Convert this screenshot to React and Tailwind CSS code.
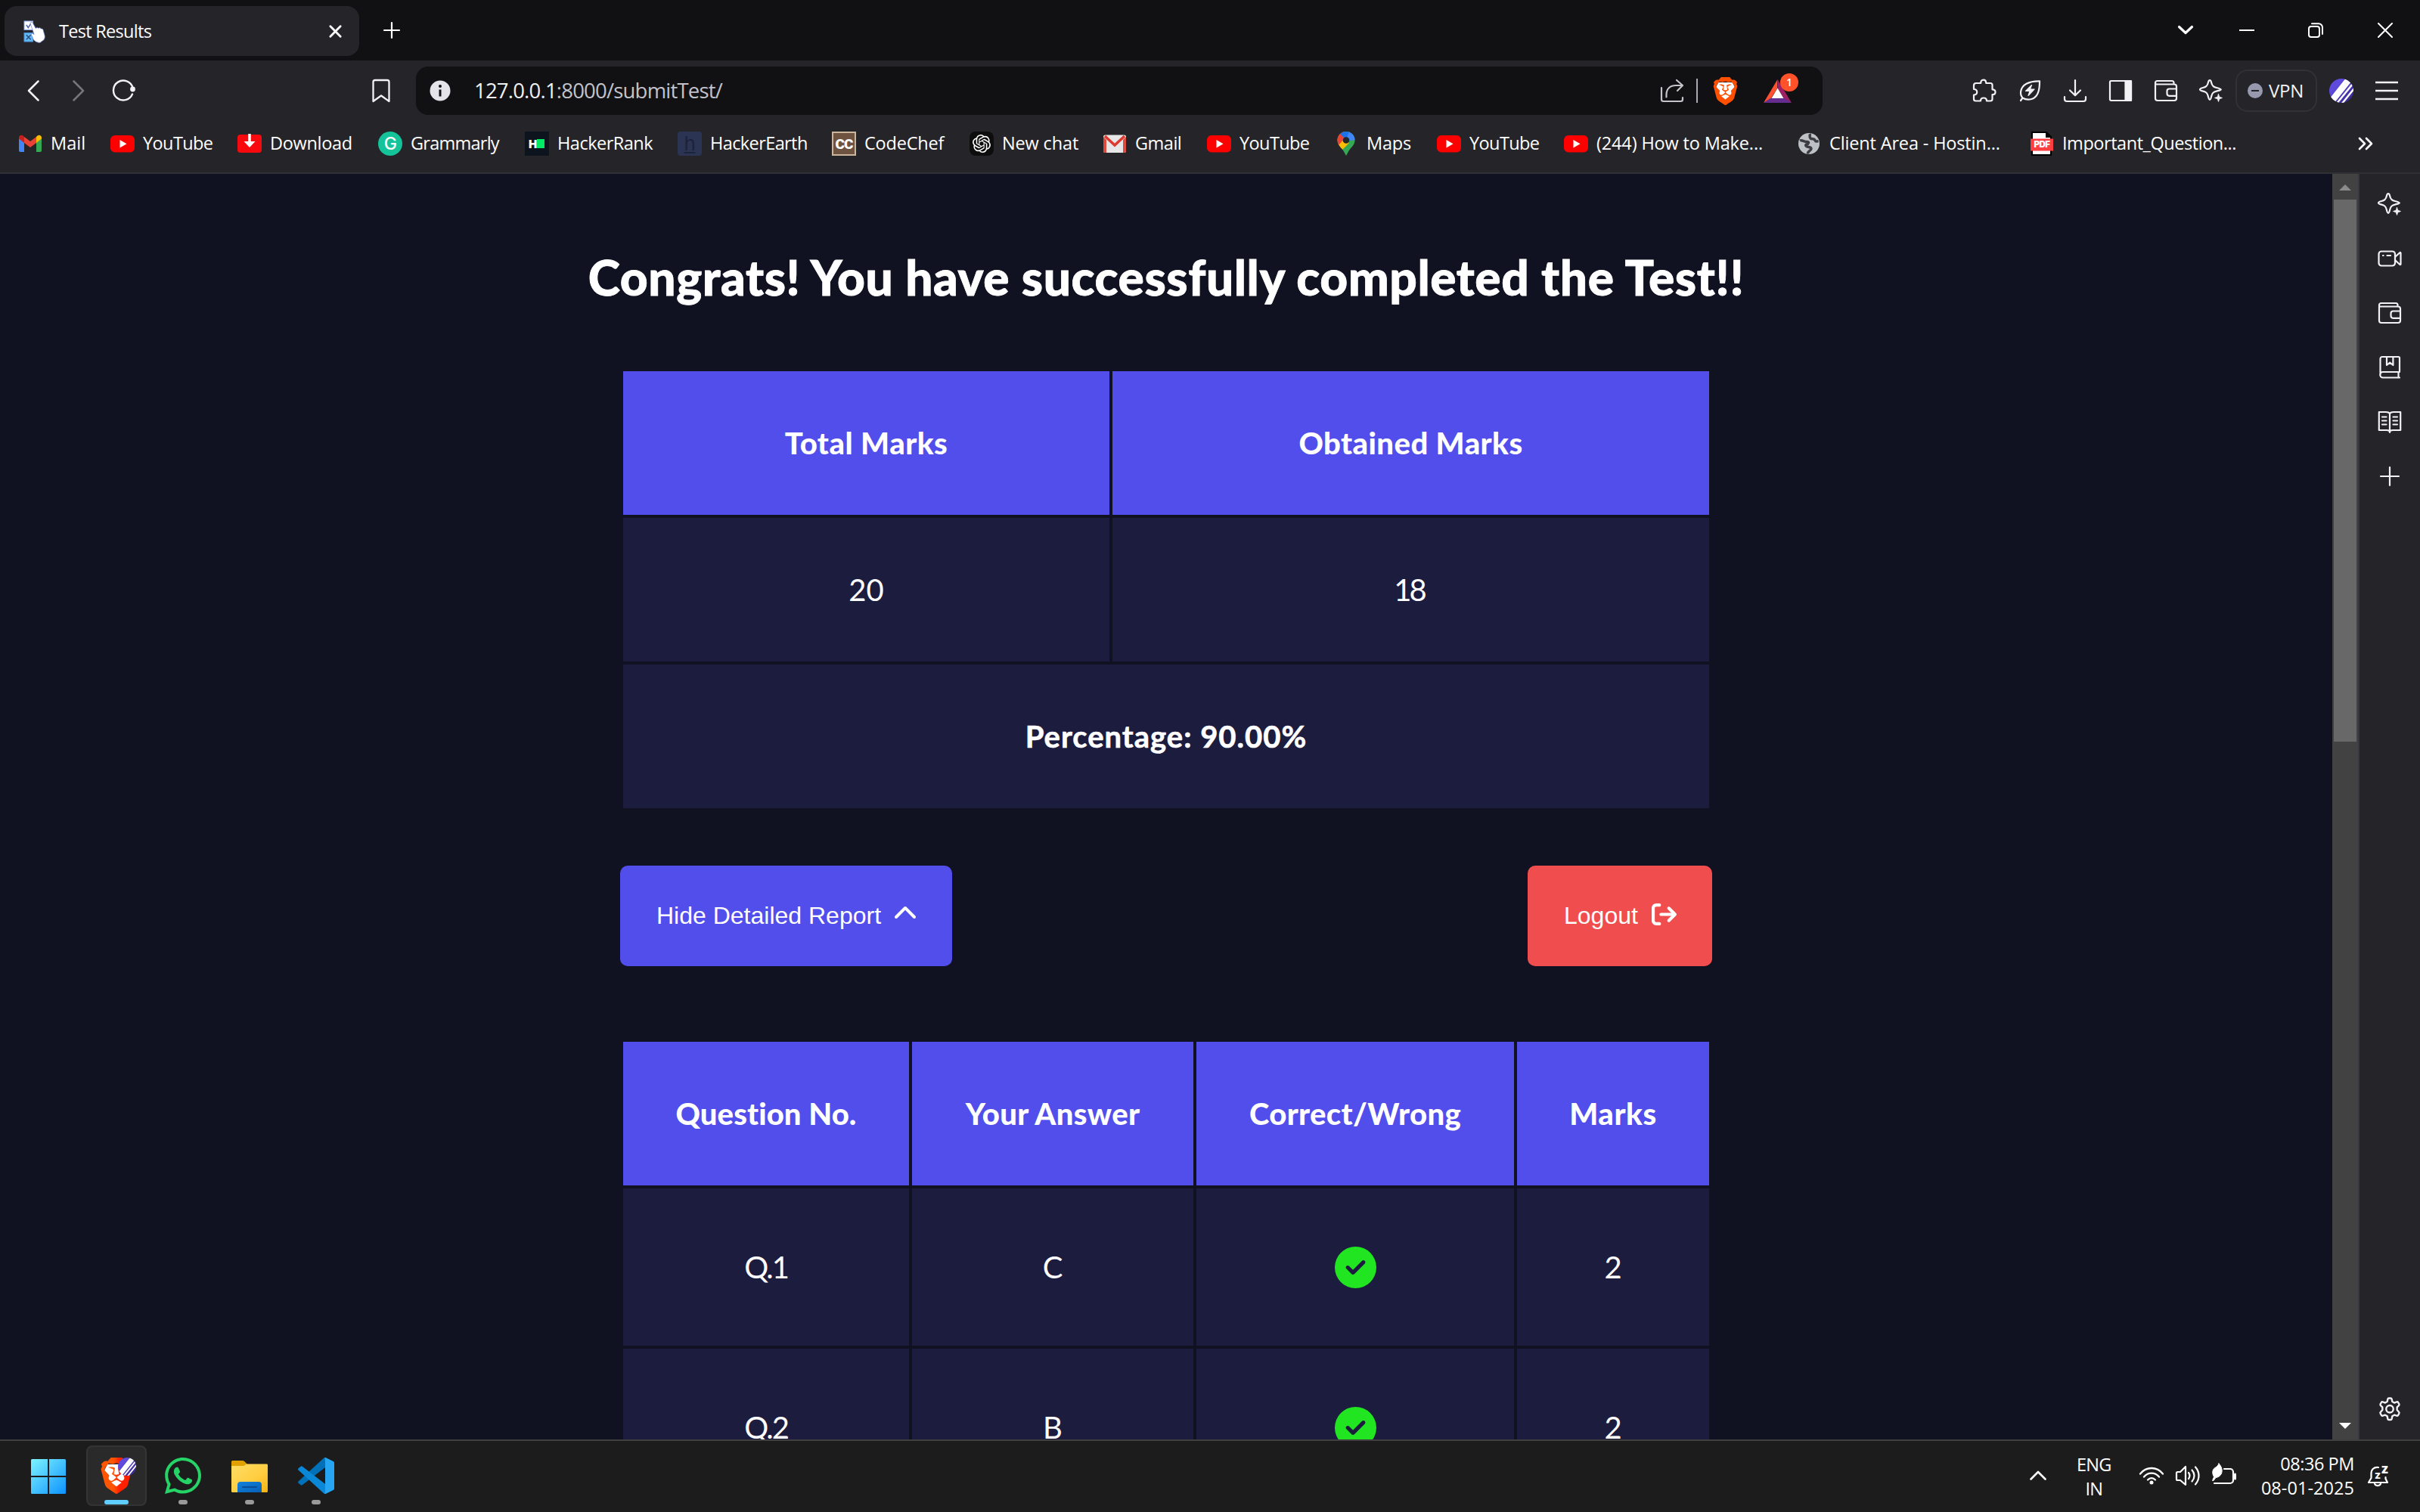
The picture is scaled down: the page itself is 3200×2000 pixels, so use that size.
import { FaChevronUp, FaArrowRightFromBracket, FaCircleCheck, FaWhatsapp } from "react-icons/fa6";
import { SiBrave, SiOpenai } from "react-icons/si";

const line = {
  fill: "none",
  stroke: "currentColor",
  strokeLinecap: "round",
  strokeLinejoin: "round",
};

/* ---------- shared outline icons, 32px grid ---------- */

function Icon({ children, className = "size-8", w = 2.2 }) {
  return (
    <svg viewBox="0 0 32 32" className={className} {...line} strokeWidth={w}>
      {children}
    </svg>
  );
}

const SparkleIcon = () => (
  <Icon>
    <path d="M14 2.2c1.300 0 1.700 1 2.200 3.200 1 4.200 2.400 5.600 6.600 6.600 2.600.6 6 1.500 6 2.400s-3.400 1.500-6 2.200c-4.200 1-5.600 2.400-6.600 6.600-.5 2.300-1 4.600-2.200 4.600s-1.700-2.300-2.200-4.600c-1-4.200-2.400-5.600-6.600-6.600C2.800 16.100 1 15.600 1 14.400S2.800 12.600 5.200 12c4.200-1 5.600-2.400 6.600-6.600.5-2.200 1-3.200 2.200-3.200z" />
    <path fill="currentColor" strokeWidth=".8" d="M25.500 20.500l1.300 3.700 3.700 1.300-3.700 1.300-1.300 3.700-1.300-3.700-3.700-1.300 3.700-1.300z" />
  </Icon>
);

const WalletIcon = () => (
  <Icon>
    <path d="M2 7.500V26a3 3 0 0 0 3 3h22a3 3 0 0 0 3-3V10.500a3 3 0 0 0-3-3H3.500A1.500 1.500 0 0 1 2 6V5.500A2.500 2.500 0 0 1 4.500 3H24a2.500 2.500 0 0 1 2.500 2.500v2" />
    <path d="M30 13.500H20.500a3 3 0 0 0-3 3v3.300a3 3 0 0 0 3 3H30" />
  </Icon>
);

const PuzzleIcon = () => (
  <Icon>
    <path d="M5 6h6.200c0-2.800 1.200-4.300 3.500-4.300S18.200 3.200 18.200 6H24a2.500 2.500 0 0 1 2.500 2.500v5.800c2.700 0 4 1.200 4 3.400s-1.300 3.400-4 3.400V27A2.500 2.500 0 0 1 24 29.500h-5c0-2.600-1.300-4-4-4s-4 1.400-4 4H4.500A2.500 2.500 0 0 1 2 27v-5.500c2.800 0 4.200-1.400 4.200-3.700S4.800 14 2 14V9a3 3 0 0 1 3-3z" />
  </Icon>
);

const LeafIcon = () => (
  <Icon>
    <path d="M4 29l2.500-3.500c-2.200-2.500-3-5-2.300-9C5.700 8.500 14 3 29 3.300c.2 12-2.500 21.500-10.500 23.700-4.500 1.200-8.500.7-12-1.500" />
    <path fill="currentColor" strokeWidth="1.200" d="M18.500 8.500l-8 8h5.500l-2 6 8-8.500h-5.500z" />
  </Icon>
);

const DownloadIcon = () => (
  <Icon>
    <path d="M16 2v20M9 15.500l7 6.800 7-6.800M2 24v3a3 3 0 0 0 3 3h22a3 3 0 0 0 3-3v-3" />
  </Icon>
);

const PanelIcon = () => (
  <Icon>
    <rect x="2" y="3" width="28" height="26" rx="1.500" />
    <rect x="22.500" y="3" width="7.500" height="26" fill="currentColor" />
  </Icon>
);

const VideoIcon = () => (
  <Icon>
    <rect x="1.500" y="6.500" width="21.500" height="19" rx="3.500" />
    <path d="M23 14l6.200-5.800c.6-.6 1.300-.3 1.300.6v14.400c0 .9-.7 1.200-1.300.6L23 18M7 12h.6M12.500 12h4.500" />
  </Icon>
);

const BookmarkBookIcon = () => (
  <Icon>
    <path d="M3.500 26V4.500A2.500 2.500 0 0 1 6 2h21.500A1.500 1.500 0 0 1 29 3.500V22H7a3.500 3.500 0 1 0 0 7.500h22M27.500 22v7.500M12 2v11l4.200-3.300 4.200 3.300V2" />
  </Icon>
);

const ReaderIcon = () => (
  <Icon>
    <path d="M16 5c-1-1.500-3-2-5-2H1.800v24H12c2.500 0 4 1 4 3 0-2 1.500-3 4-3h10.200V3H21c-2 0-4 .5-5 2zM16 5v25M6 9.500h5.500M6 14.500h5.500M6 19.500h5.500M20.500 9.500H26M20.500 14.500H26M20.500 19.500H26" />
  </Icon>
);

const PlusIcon = () => (
  <Icon>
    <path d="M16 4v24M4 16h24" />
  </Icon>
);

const GearIcon = () => (
  <svg viewBox="0 0 24 24" className="mb-0.5 size-[38px]" {...line} strokeWidth="1.500">
    <circle cx="12" cy="12.500" r="3" />
    <path d="M10.300 2.800c.1-.5.5-.8 1-.8h1.400c.5 0 .9.300 1 .8l.4 2 1.700 1 2-.7c.5-.2 1 0 1.200.4l.8 1.300c.2.400.2.9-.2 1.200l-1.500 1.500v2.300l1.500 1.700c.4.300.4.800.2 1.200L19 16.200c-.2.400-.7.600-1.200.4l-2-.6-1.700 1-.4 2.200c-.1.500-.5.800-1 .8h-1.400c-.5 0-.9-.3-1-.8L9.900 17l-1.700-1-2 .6c-.5.200-1 0-1.200-.4l-.8-1.500c-.2-.4-.2-.9.200-1.200l1.500-1.700V9.500L4.400 8c-.4-.3-.4-.8-.2-1.200L5 5.500c.2-.4.7-.6 1.200-.4l2 .7 1.700-1z" transform="translate(0 1.500)" />
  </svg>
);

function NightlyBadge({ className }) {
  return (
    <svg viewBox="0 0 32 32" className={className}>
      <defs>
        <linearGradient id="nightly" x1="0" y1="0" x2="1" y2="1">
          <stop offset=".3" stopColor="#5e4bdb" />
          <stop offset="1" stopColor="#33217f" />
        </linearGradient>
        <clipPath id="nightlyClip">
          <circle cx="16" cy="16" r="16" />
        </clipPath>
      </defs>
      <g clipPath="url(#nightlyClip)">
        <rect width="32" height="32" fill="url(#nightly)" />
        <path d="M3 30L26 1" stroke="#fff" strokeWidth="8.500" />
        <path d="M9 34L33 4.500M14.500 36L37 8" stroke="#fff" strokeWidth="2.400" />
      </g>
    </svg>
  );
}

function BraveLion({ className, fill }) {
  return (
    <span className="relative flex">
      <svg viewBox="0 0 24 24" className={`absolute inset-0 ${className}`}>
        <path fill="#fff" d="M6 4.500h12l2 4-3 9-5 4-5-4-3-9z" />
      </svg>
      <SiBrave className={`relative ${className}`} fill={fill} />
    </span>
  );
}

/* ---------- tab strip ---------- */

function TabStrip() {
  return (
    <div className="flex h-20 shrink-0 items-center bg-[#111113]">
      <div className="ml-1.5 flex h-[66px] w-[469px] items-center rounded-2xl bg-[#252429] pl-[25px] pr-5 mt-0.5">
        <svg viewBox="0 0 32 32" className="size-[31px] shrink-0">
          <rect x="1" y="2" width="12" height="12" fill="#fff" stroke="#7fa0e8" />
          <path d="M4 7l2.500 4L11 4" fill="none" stroke="#4a5fa5" strokeWidth="1.500" />
          <rect x="1" y="18" width="12" height="12" fill="#62b8f0" stroke="#4a8fdc" />
          <path d="M4 21l6 6M10 21l-6 6" stroke="#26477f" strokeWidth="1.400" />
          <path d="M9.500 5.500C9 3.500 11.500 2.500 12.700 4.500L17 12c.6-1.500 2.800-1.600 3.500-.2.900-1.100 2.900-.8 3.400.7 1.200-.6 2.700.1 3 1.500l2 7c.7 2.500.4 4.500-1 6.500l-5.400 4c-3.500-.3-7-1.500-9-4.500L11 21c-.8-1.500.8-2.800 2.200-1.800l1.300 1z" fill="#fff" stroke="#5f78d0" strokeWidth=".7" />
        </svg>
        <span className="ml-4 mt-0.5 text-[23.500px] tracking-[-0.700px]">Test Results</span>
        <svg viewBox="0 0 20 20" className="ml-auto mr-0.5 size-[19px]" {...line} strokeWidth="3">
          <path d="M3 3l14 14M17 3L3 17" />
        </svg>
      </div>
      <svg viewBox="0 0 24 24" className="ml-[31px] size-6" {...line} strokeWidth="2.200">
        <path d="M12 2v20M2 12h20" />
      </svg>
      <div className="ml-auto mr-9 flex items-center">
        <svg viewBox="0 0 22 22" className="size-[22px]" {...line} strokeWidth="3.200">
          <path d="M2.500 6.500L11 14.500l8.500-8" />
        </svg>
        <svg viewBox="0 0 20 20" className="ml-[60px] size-5">
          <path d="M0 10h20" stroke="#fff" strokeWidth="2" />
        </svg>
        <svg viewBox="0 0 20 20" className="ml-[71px] size-5" {...line} strokeWidth="2">
          <rect x="1" y="5" width="14" height="14" rx="3" />
          <path d="M5 1.300h9a5 5 0 0 1 5 5V15" />
        </svg>
        <svg viewBox="0 0 20 20" className="ml-[72px] size-5" {...line} strokeWidth="2">
          <path d="M1 1l18 18M19 1L1 19" />
        </svg>
      </div>
    </div>
  );
}

/* ---------- navigation bar ---------- */

function Cell({ children, className = "" }) {
  return <div className={`flex w-[60px] shrink-0 items-center justify-center ${className}`}>{children}</div>;
}

function AddressBar() {
  return (
    <div className="ml-4 flex h-16 w-[1860px] items-center rounded-2xl bg-[#111113] pl-[18px]">
      <svg viewBox="0 0 28 28" className="size-7">
        <circle cx="14" cy="14" r="13.500" fill="#e4e3ea" />
        <circle cx="14" cy="8" r="2" fill="#111113" />
        <path d="M14 12.500v9" stroke="#111113" strokeWidth="3" />
      </svg>
      <span className="ml-[31px] text-[27.500px] tracking-[-0.800px] text-[#c3c3cb]">
        <span className="text-[#f0f0f4]">127.0.0.1</span>:8000/submitTest/
      </span>
      <svg viewBox="0 0 32 32" className="ml-auto size-8 text-[#c4c4ca]" {...line} strokeWidth="2.200">
        <path d="M2 12v15.500A2.500 2.500 0 0 0 4.500 30h23a2.500 2.500 0 0 0 2.500-2.500V25M8.500 24.500V21C8.500 13 14 9 21 9h8.500M22 2l8 7-7 7" />
      </svg>
      <span className="ml-4 h-8 w-0.5 bg-[#a9a9b0]" />
      <span className="ml-[18px] flex">
        <BraveLion className="size-[37px]" fill="#ff5000" />
      </span>
      <span className="relative ml-8 mr-[41px] flex">
        <svg viewBox="0 0 37 33" className="h-[33px] w-[37px]">
          <path d="M18.500 1L0 32l10-6 8-13z" fill="#ff5030" />
          <path d="M18.500 1L37 32l-10-6-8.500-13z" fill="#9e1f63" />
          <path d="M0 32h37l-10-6.500H10z" fill="#662d91" />
          <path d="M18.500 12.500L26.500 26h-16z" fill="#fff" />
        </svg>
        <span className="absolute -top-[7px] left-[22px] flex size-6 items-center justify-center rounded-full bg-[#ff5229] text-[14px] font-semibold leading-none text-white">
          1
        </span>
      </span>
    </div>
  );
}

function NavBar() {
  return (
    <div className="flex h-20 items-center text-[#f2f2f5]">
      <Cell className="ml-3.5">
        <svg viewBox="0 0 16 28" className="h-7 w-4" {...line} strokeWidth="2.500">
          <path d="M14.500 1.500L2 14l12.500 12.500" />
        </svg>
      </Cell>
      <Cell className="text-[#77767c]">
        <svg viewBox="0 0 16 28" className="h-7 w-4" {...line} strokeWidth="2.500">
          <path d="M1.500 1.500L14 14 1.500 26.500" />
        </svg>
      </Cell>
      <Cell>
        <svg viewBox="0 0 32 32" className="size-8" {...line} strokeWidth="2.400">
          <path d="M27 20.500A13 13 0 1 1 27.500 12" />
          <circle cx="27.500" cy="14" r="3.400" fill="currentColor" stroke="none" />
        </svg>
      </Cell>
      <Cell className="ml-[280px]">
        <svg viewBox="0 0 24 32" className="h-8 w-6" {...line} strokeWidth="2.300">
          <path d="M4 2h16a2.500 2.500 0 0 1 2.500 2.500V30L12 22.500 1.500 30V4.500A2.500 2.500 0 0 1 4 2z" />
        </svg>
      </Cell>
      <AddressBar />
      <Cell className="ml-[184px]">
        <PuzzleIcon />
      </Cell>
      <Cell>
        <LeafIcon />
      </Cell>
      <Cell>
        <DownloadIcon />
      </Cell>
      <Cell>
        <PanelIcon />
      </Cell>
      <Cell>
        <WalletIcon />
      </Cell>
      <Cell>
        <SparkleIcon />
      </Cell>
      <div className="ml-0.5 flex h-14 w-[108px] items-center rounded-2xl border-2 border-[#323137] pl-3.5">
        <span className="flex size-5 items-center justify-center rounded-full bg-[#9799ae]">
          <span className="h-[2.500px] w-2.5 bg-[#252429]" />
        </span>
        <span className="ml-2 text-[24px] leading-none tracking-[-0.300px]">VPN</span>
      </div>
      <NightlyBadge className="ml-4 size-8" />
      <svg viewBox="0 0 30 26" className="ml-[29px] h-[26px] w-[30px]" {...line} strokeLinecap="butt" strokeWidth="2.500">
        <path d="M0 2h30M0 13h30M0 24h30" />
      </svg>
    </div>
  );
}

/* ---------- bookmarks ---------- */

const YouTube = () => (
  <svg viewBox="0 0 32 32" className="size-8">
    <rect y="5" width="32" height="22.500" rx="6" fill="#f00" />
    <path d="M12.500 11l9 5.200-9 5.200z" fill="#fff" />
  </svg>
);

const MailM = () => (
  <svg viewBox="0 0 32 32" className="size-8">
    <path d="M1 9v16a2 2 0 0 0 2 2h5V14z" fill="#4285f4" />
    <path d="M24 14v13h5a2 2 0 0 0 2-2V9z" fill="#34a853" />
    <path d="M24 7v8l7-5.500V8c0-3-3.300-4.300-5.500-2.500z" fill="#fbbc04" />
    <path d="M8 15V7l8 6 8-6v8l-8 6z" fill="#ea4335" />
    <path d="M1 8v1.500L8 15V7L6.500 5.500C4.300 3.700 1 5 1 8z" fill="#c5221f" />
  </svg>
);

const DownloadFav = () => (
  <svg viewBox="0 0 32 32" className="size-8">
    <rect y="4" width="32" height="24" rx="4" fill="#f8090d" />
    <path d="M16 3v13" stroke="#fff" strokeWidth="3.500" />
    <path d="M8.500 13h15L16 21z" fill="#fff" />
  </svg>
);

const Grammarly = () => (
  <span className="flex size-8 items-center justify-center rounded-full bg-[#15c39a] font-[Inter] text-[23px] font-medium leading-none text-white">G</span>
);

const HackerRank = () => (
  <span className="flex size-8 items-center bg-[#0e141e] pl-[5px]">
    <span className="font-[Inter] text-[15px] font-black leading-none text-white">H</span>
    <span className="h-3 w-2.5 bg-[#00ea64]" />
  </span>
);

const HackerEarth = () => (
  <span className="flex size-8 items-center justify-center rounded-sm bg-[#2c3454] font-[Inter] text-[26px] leading-none text-[#1c2238] underline decoration-2 underline-offset-2">h</span>
);

const CodeChef = () => (
  <span className="flex size-8 items-center justify-center border-2 border-[#cbb59b] bg-[#6f5341] font-['Roboto'] text-[19px] font-black leading-none tracking-[-1px] text-white">CC</span>
);

const ChatFav = () => (
  <span className="flex size-8 items-center justify-center rounded-lg bg-[#0d0d0d]">
    <SiOpenai className="size-6" />
  </span>
);

const Gmail = () => (
  <svg viewBox="0 0 32 32" className="size-8">
    <rect x="1" y="4.500" width="30" height="23.500" rx="2.500" fill="#e8e7e7" />
    <path d="M1 7v19a2 2 0 0 0 2 2h2V11zM31 7v19a2 2 0 0 1-2 2h-2V11z" fill="#dd4b3e" />
    <path d="M3 6l13 12L29 6" fill="none" stroke="#dd3b30" strokeWidth="3.500" />
  </svg>
);

const MapsPin = () => (
  <svg viewBox="0 0 32 32" className="size-8">
    <defs>
      <clipPath id="pin">
        <path d="M16 0a11.500 11.500 0 0 1 11.500 11.500c0 7-5.500 9.500-8.500 15L16 32l-3-5.500C10 21 4.500 18.500 4.500 11.500A11.500 11.500 0 0 1 16 0z" />
      </clipPath>
    </defs>
    <g clipPath="url(#pin)">
      <rect width="32" height="32" fill="#34a853" />
      <path d="M0 0h16L7 11 0 14z" fill="#ea4335" />
      <path d="M7 3l9 8L27 0H10z" fill="#1a73e8" />
      <path d="M20 0h12v11l-12 1-4-2z" fill="#4285f4" />
      <path d="M4 19l9-11 7 7-11 11z" fill="#fbbc04" />
      <path d="M0 3h8l6 6-8 9-6-2z" fill="#ea4335" />
    </g>
    <circle cx="16" cy="11.500" r="4.300" fill="#252429" />
  </svg>
);

const Globe = () => (
  <svg viewBox="0 0 32 32" className="size-8">
    <circle cx="16" cy="16" r="14" fill="#bdc1c6" />
    <path d="M4 12c3-1.500 6 2 9.500 1.500 3.500 0 2 3-.5 3.500s-1 3.500 2.500 3.500 4.500 2.500 2 4.500-3 2-3 4.500M17 3c1 2-1 4.500 1 6s5 0 6 2.500 2 1.500 4.500 1" fill="none" stroke="#3c3c42" strokeWidth="3.500" />
  </svg>
);

const PdfFav = () => (
  <span className="relative flex size-8 items-center justify-center">
    <svg viewBox="0 0 32 32" className="absolute inset-0 size-8">
      <path d="M3 1h19l6 6v24H3z" fill="#fff" stroke="#000" strokeWidth="2" />
      <path d="M21 0v8h8z" fill="#000" />
      <rect x="1" y="9.500" width="30" height="16" fill="#ff3e42" />
    </svg>
    <span className="relative pt-[3px] font-[Inter] text-[11.500px] font-black leading-none text-white">PDF</span>
  </span>
);

const bookmarks = [
  { icon: MailM, text: "Mail", cls: "w-[122px] tracking-[0px]" },
  { icon: YouTube, text: "YouTube", cls: "w-[168px] tracking-[-0.600px]" },
  { icon: DownloadFav, text: "Download", cls: "w-[186px] tracking-[-0.300px]" },
  { icon: Grammarly, text: "Grammarly", cls: "w-[194px] tracking-[-0.750px]" },
  { icon: HackerRank, text: "HackerRank", cls: "w-[202px] tracking-[-0.500px]" },
  { icon: HackerEarth, text: "HackerEarth", cls: "w-[204px] tracking-[-0.600px]" },
  { icon: CodeChef, text: "CodeChef", cls: "w-[182px] tracking-[-0.200px]" },
  { icon: ChatFav, text: "New chat", cls: "w-[176px] tracking-[-0.150px]" },
  { icon: Gmail, text: "Gmail", cls: "w-[138px] tracking-[-0.500px]" },
  { icon: YouTube, text: "YouTube", cls: "w-[168px] tracking-[-0.600px]" },
  { icon: MapsPin, text: "Maps", cls: "w-[136px] tracking-[-0.200px]" },
  { icon: YouTube, text: "YouTube", cls: "w-[168px] tracking-[-0.600px]" },
  { icon: YouTube, text: "(244) How to Make...", cls: "w-[308px] tracking-[-0.150px]" },
  { icon: Globe, text: "Client Area - Hostin...", cls: "w-[308px] tracking-[-0.150px]" },
  { icon: PdfFav, text: "Important_Question...", cls: "w-[308px] tracking-[-0.450px]" },
];

function Bookmarks() {
  return (
    <div className="flex h-[60px] items-center pl-6 text-white">
      {bookmarks.map(({ icon: Fav, text, cls }, i) => (
        <div key={i} className={`flex shrink-0 items-center gap-[11px] whitespace-nowrap text-[23.500px] leading-none ${cls}`}>
          <span className="shrink-0">
            <Fav />
          </span>
          {text}
        </div>
      ))}
      <svg viewBox="0 0 20 18" className="ml-auto mr-[62px] h-[18px] w-5" {...line} strokeWidth="2.600">
        <path d="M2 2l7 7-7 7M11 2l7 7-7 7" />
      </svg>
    </div>
  );
}

/* ---------- page ---------- */

function Th({ children, className = "" }) {
  return (
    <div className={`flex h-[190px] items-center justify-center bg-[#514eec] font-black ${className}`}>{children}</div>
  );
}

function Td({ children, className = "h-[190px]" }) {
  return <div className={`flex items-center justify-center bg-[#1c1c3f] ${className}`}>{children}</div>;
}

const answers = [
  { q: "Q.1", answer: "C", marks: "2" },
  { q: "Q.2", answer: "B", marks: "2" },
];

function ResultPage() {
  return (
    <main className="flex flex-1 flex-col items-center overflow-hidden bg-[#101221] pt-[97px] font-['Lato',sans-serif] text-[40px] leading-none text-white">
      <h1 className="text-[64px] font-black leading-[80px] tracking-[0.580px] [-webkit-text-stroke:0.800px_white]">
        Congrats! You have successfully completed the Test!!
      </h1>

      <section className="mt-[84px] grid w-[1436px] shrink-0 grid-cols-[643px_789px] gap-1">
        <Th className="tracking-[0.500px]">Total Marks</Th>
        <Th className="tracking-[0.450px]">Obtained Marks</Th>
        <Td>20</Td>
        <Td className="h-[190px] pr-1 tracking-[-3px]">18</Td>
        <Td className="col-span-2 h-[190px] font-bold tracking-[1px] [-webkit-text-stroke:0.600px_white]">Percentage: 90.00%</Td>
      </section>

      <div className="mt-[76px] flex w-[1444px] shrink-0 justify-between font-['Liberation_Sans',sans-serif] text-[32px]">
        <button className="flex h-[133px] w-[439px] items-center rounded-[10px] bg-[#514eec] pb-0.5 pl-12">
          Hide Detailed Report
          <FaChevronUp className="mb-1 ml-4 size-8" />
        </button>
        <button className="flex h-[133px] w-[244px] items-center rounded-[10px] bg-[#f04e4e] pb-0.5 pl-12">
          Logout
          <FaArrowRightFromBracket className="mb-[3px] ml-[18px] size-[33px]" />
        </button>
      </div>

      <section className="mt-[100px] grid w-[1436px] shrink-0 grid-cols-[378px_372px_420px_254px] gap-1">
        <Th className="tracking-[0.100px]">Question No.</Th>
        <Th className="tracking-[0.350px]">Your Answer</Th>
        <Th className="tracking-[0.350px]">Correct/Wrong</Th>
        <Th className="tracking-[0.600px]">Marks</Th>
        {answers.map(({ q, answer, marks }) => (
          <div key={q} className="contents">
            <Td className="h-52 tracking-[-2px]">{q}</Td>
            <Td className="h-52">{answer}</Td>
            <Td className="h-52">
              <FaCircleCheck className="size-[55px] text-[#20e520]" />
            </Td>
            <Td className="h-52">{marks}</Td>
          </div>
        ))}
      </section>
    </main>
  );
}

function Scrollbar() {
  return (
    <div className="flex w-[34px] shrink-0 flex-col items-center bg-[#424242]">
      <div className="flex h-[34px] items-center">
        <svg viewBox="0 0 16 8" className="h-2 w-4 mt-0.5">
          <path d="M0 8L8 0l8 8z" fill="#8b8b8b" />
        </svg>
      </div>
      <div className="h-[717px] w-[30px] bg-[#686868]" />
      <svg viewBox="0 0 16 8" className="mt-auto mb-3.5 h-2 w-4">
        <path d="M0 0h16L8 8z" fill="#fff" />
      </svg>
    </div>
  );
}

function Sidebar() {
  const items = [SparkleIcon, VideoIcon, WalletIcon, BookmarkBookIcon, ReaderIcon, PlusIcon];
  return (
    <aside className="flex w-[82px] shrink-0 flex-col items-center border-l-2 border-[#38373d] bg-[#252429] pt-1 text-[#f2f2f5]">
      {items.map((Item, i) => (
        <div key={i} className="flex h-[72px] items-center">
          <Item />
        </div>
      ))}
      <div className="mt-auto flex h-20 items-center">
        <GearIcon />
      </div>
    </aside>
  );
}

/* ---------- taskbar ---------- */

function TaskItem({ children, active }) {
  return active ? (
    <div className="flex h-20 w-20 flex-col items-center rounded-lg border-2 border-[#343434] bg-[#2a2a2a] pt-3.5">
      <div className="h-12">{children}</div>
      <span className="mt-2 h-1.5 w-8 rounded-full bg-[#60cdff]" />
    </div>
  ) : (
    <div className="flex h-20 w-20 flex-col items-center pt-4">
      <div className="h-12">{children}</div>
      <span className="mt-2 h-1.5 w-3 rounded-full bg-[#9a9a9a]" />
    </div>
  );
}

const WindowsLogo = () => (
  <svg viewBox="0 0 46 46" className="size-[46px]">
    <defs>
      <linearGradient id="win" x1="0" y1="0" x2="46" y2="46" gradientUnits="userSpaceOnUse">
        <stop stopColor="#7df4ff" />
        <stop offset=".5" stopColor="#46c3ff" />
        <stop offset="1" stopColor="#0b93ff" />
      </linearGradient>
    </defs>
    <g fill="url(#win)">
      <path d="M1.500 0H22v22H0V1.500A1.500 1.500 0 0 1 1.500 0z" />
      <path d="M24 0h20.500A1.500 1.500 0 0 1 46 1.500V22H24z" />
      <path d="M0 24h22v22H1.500A1.500 1.500 0 0 1 0 44.500z" />
      <path d="M24 24h22v20.500a1.500 1.500 0 0 1-1.500 1.500H24z" />
    </g>
  </svg>
);

const FolderLogo = () => (
  <svg viewBox="0 0 48 48" className="size-12">
    <defs>
      <linearGradient id="folder" x1="0" y1="0" x2="1" y2="1">
        <stop stopColor="#ffdd66" />
        <stop offset=".6" stopColor="#ffcd3f" />
        <stop offset="1" stopColor="#f5b211" />
      </linearGradient>
      <linearGradient id="folderBlue" x1="0" y1="0" x2="1" y2="1">
        <stop stopColor="#1482dc" />
        <stop offset="1" stopColor="#0560b5" />
      </linearGradient>
    </defs>
    <path d="M0 5.500A1.500 1.500 0 0 1 1.500 4H14c1.500 0 2.500.4 3.500 1.300L21 9v6H0z" fill="#e0a000" />
    <path d="M0 11h15c1.500 0 2.300-.5 3.200-1.300.9-.9 1.800-1.300 3.200-1.300h25A1.500 1.500 0 0 1 48 9.900V44.500a1.500 1.500 0 0 1-1.500 1.500h-45A1.500 1.500 0 0 1 0 44.500z" fill="url(#folder)" />
    <path d="M8 46V36a4 4 0 0 1 4-4h24a4 4 0 0 1 4 4v10z" fill="url(#folderBlue)" />
    <path d="M15 39h18" stroke="#0b4a94" strokeWidth="2" strokeLinecap="round" />
  </svg>
);

const CodeLogo = () => (
  <svg viewBox="0 0 48 48" className="size-12">
    <path d="M.5 31.500L34 .8l2-.5V13L5.800 36.300q-1.100.8-2.100 0L.6 33.700q-1-1.100-.1-2.200z" fill="#0070b8" />
    <path d="M.5 16.500L34 47.200l2 .5V35L5.800 11.700q-1.100-.8-2.100 0L.6 14.300q-1 1.100-.1 2.200z" fill="#0a87d6" />
    <path d="M34.500.4q1.300-.7 2.600-.1L46.700 5Q48 5.700 48 7v34q0 1.300-1.300 2l-9.600 4.700q-1.300.6-2.600-.1Q36 47 36 45.500v-43Q36 1 34.500.4z" fill="#26a6f2" />
  </svg>
);

function Taskbar() {
  return (
    <footer className="flex h-24 shrink-0 items-start border-t-2 border-[#404040] bg-[#1c1c1c] pt-1.5 text-white">
      <div className="ml-[41px] mt-[18px]">
        <WindowsLogo />
      </div>
      <div className="ml-[27px] flex gap-2">
        <TaskItem active>
          <div className="relative">
            <svg className="absolute size-0">
              <defs>
                <linearGradient id="brave" x1="0" y1="0" x2="1" y2="0">
                  <stop offset=".4" stopColor="#ff5500" />
                  <stop offset=".6" stopColor="#ff2000" />
                </linearGradient>
              </defs>
            </svg>
            <BraveLion className="size-12" fill="url(#brave)" />
            <NightlyBadge className="absolute -right-0.5 top-0 size-6" />
          </div>
        </TaskItem>
        <TaskItem>
          <FaWhatsapp viewBox="0 32 448 448" className="size-12 text-[#25d366]" />
        </TaskItem>
        <TaskItem>
          <FolderLogo />
        </TaskItem>
        <TaskItem>
          <CodeLogo />
        </TaskItem>
      </div>

      <div className="ml-auto flex h-20 items-center">
        <svg viewBox="0 0 22 13" className="mb-px mr-[3px] h-[13px] w-[22px]" {...line} strokeWidth="2.600">
          <path d="M1.500 11.500L11 2l9.500 9.500" />
        </svg>
        <div className="ml-[36px] mr-0.5 flex w-[48px] flex-col items-center pt-px text-[23.500px] leading-8 tracking-[-0.700px]">
          <span>ENG</span>
          <span>IN</span>
        </div>
        <svg viewBox="0 0 34 26" className="ml-[33px] h-[26px] w-[34px]" {...line} strokeWidth="2.300">
          <path d="M2 10.500C10 .5 24 .5 32 10.500M7 14.500c5.500-6.500 14.500-6.500 20 0M12 18.500c3-3.300 7-3.300 10 0" />
          <circle cx="17" cy="22" r="2.500" fill="currentColor" stroke="none" />
        </svg>
        <svg viewBox="0 0 34 30" className="ml-3.5 h-[30px] w-[34px]" {...line} strokeWidth="2.200">
          <path d="M2 11.500A1.500 1.500 0 0 1 3.500 10H7l7-7v24l-7-6H3.500A1.500 1.500 0 0 1 2 19.500zM18 11c1.800 2.500 1.800 5.500 0 8M22.500 7.500c4 4.500 4 10.500 0 15M27 3.500c6 7 6 16 0 23" />
        </svg>
        <svg viewBox="0 0 34 30" className="ml-3.5 mt-[-6px] h-[30px] w-[34px]" {...line} strokeWidth="2.200">
          <path d="M17 9h8a4 4 0 0 1 4 4v11a4 4 0 0 1-4 4H4" />
          <path d="M31.500 16v6" strokeWidth="3" />
          <path d="M10 2c4 4 5 9 3.500 13-1.500 3.500-4.500 5-7.500 5.500L3 24.500H1.500l2-5C1 15 1 10 5 7.500 7.500 6 9 4.500 10 2z" fill="currentColor" strokeWidth="1" />
        </svg>
        <div className="mb-px ml-8 flex flex-col items-end text-[23.500px] leading-8">
          <span className="tracking-[-0.450px]">08:36 PM</span>
          <span className="tracking-[0.050px]">08-01-2025</span>
        </div>
        <svg viewBox="0 0 30 30" className="ml-[17px] mr-10 size-[30px]" {...line} strokeWidth="2.200">
          <path d="M15 4C9 3 5.500 7 5.500 12v6L2 24h25l-2.500-5v-2M10 25.500c1 3.500 7 3.500 8 0" />
          <g fill="currentColor" stroke="none" fontFamily="Inter" fontWeight="800">
            <text x="10" y="19" fontSize="14">z</text>
            <text x="18.500" y="11.500" fontSize="17">z</text>
          </g>
        </svg>
      </div>
    </footer>
  );
}

export default function App() {
  return (
    <div className="flex h-[2000px] w-[3200px] flex-col overflow-hidden bg-[#101221] font-['Open_Sans',sans-serif] text-white">
      <TabStrip />
      <div className="h-[150px] shrink-0 border-b-2 border-[#313036] bg-[#252429]">
        <NavBar />
        <Bookmarks />
      </div>
      <div className="flex min-h-0 flex-1">
        <ResultPage />
        <Scrollbar />
        <Sidebar />
      </div>
      <Taskbar />
    </div>
  );
}
